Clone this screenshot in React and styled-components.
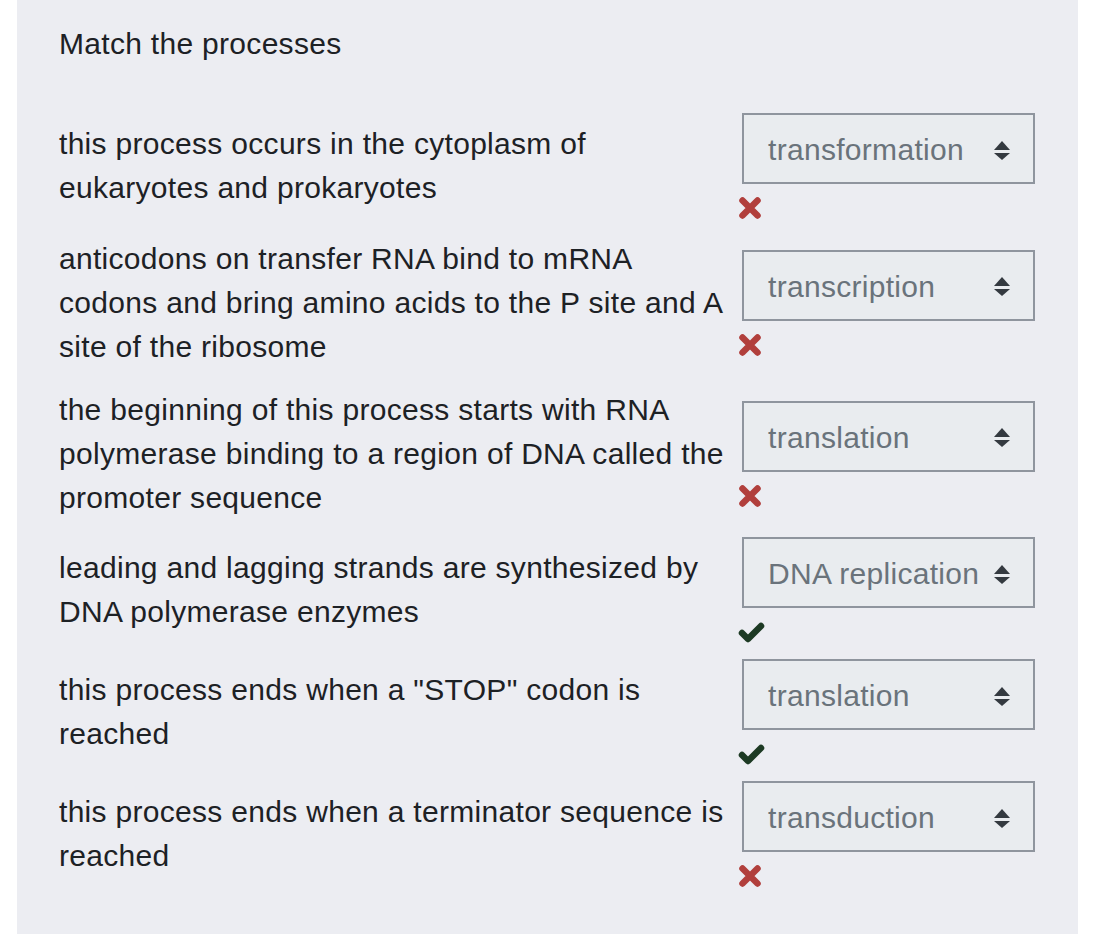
import React from "react";
import styled, { createGlobalStyle } from "styled-components";

const GlobalStyle = createGlobalStyle`
  html, body { margin: 0; padding: 0; background: #ffffff; }
  body { font-family: "Liberation Sans", Arial, sans-serif; color: #1d2125; }
`;

const Panel = styled.div`
  margin-left: 17px;
  width: 1061px;
  box-sizing: border-box;
  background: #ecedf2;
  padding: 22px 0 39px 42px;
`;

const Title = styled.div`
  font-size: 30px;
  letter-spacing: 0.3px;
  line-height: 44px;
  color: #1d2125;
  margin-bottom: 39px;
`;

const Table = styled.div`
  display: grid;
  grid-template-columns: 683px 293px;
  align-items: center;
`;

const Prompt = styled.div`
  font-size: 30px;
  letter-spacing: 0.3px;
  line-height: 44px;
  padding: 9.5px 0;
  color: #1d2125;
  white-space: nowrap;
`;

const Control = styled.div`
  display: flex;
  flex-direction: column;
  padding: 8px 0;
`;

const SelectBox = styled.div`
  box-sizing: border-box;
  width: 293px;
  height: 71px;
  border: 2px solid #8f959e;
  background: #e9ecef;
  display: flex;
  align-items: center;
  justify-content: space-between;
  padding: 3px 23px 0 24px;
  font-size: 30px;
  letter-spacing: 0.3px;
  color: #6a737b;
`;

const Feedback = styled.div`
  height: 22px;
  margin-top: 13px;
  margin-left: -5px;
  display: flex;
  align-items: center;
`;

const Arrows = () => (
  <svg width="16" height="19" viewBox="0 0 16 19" aria-hidden="true">
    <path d="M0 9 L8 0 L16 9 Z" fill="#343a40" />
    <path d="M0 12 L16 12 L8 19 Z" fill="#343a40" />
  </svg>
);

const CrossIcon = () => (
  <svg width="26" height="24" viewBox="0 0 26 24" aria-label="Incorrect">
    <path
      d="M5.5 4.5 L20.5 19.5 M20.5 4.5 L5.5 19.5"
      stroke="#b13f3c"
      strokeWidth="6.5"
      strokeLinecap="round"
      fill="none"
    />
  </svg>
);

const CheckIcon = () => (
  <svg width="28" height="24" viewBox="0 0 28 24" aria-label="Correct">
    <path
      d="M5 13 L11 19 L24 6"
      stroke="#1d3a24"
      strokeWidth="6.5"
      strokeLinecap="round"
      strokeLinejoin="round"
      fill="none"
    />
  </svg>
);

const rows = [
  {
    lines: ["this process occurs in the cytoplasm of", "eukaryotes and prokaryotes"],
    value: "transformation",
    correct: false,
  },
  {
    lines: [
      "anticodons on transfer RNA bind to mRNA",
      "codons and bring amino acids to the P site and A",
      "site of the ribosome",
    ],
    value: "transcription",
    correct: false,
  },
  {
    lines: [
      "the beginning of this process starts with RNA",
      "polymerase binding to a region of DNA called the",
      "promoter sequence",
    ],
    value: "translation",
    correct: false,
  },
  {
    lines: ["leading and lagging strands are synthesized by", "DNA polymerase enzymes"],
    value: "DNA replication",
    correct: true,
  },
  {
    lines: ['this process ends when a "STOP" codon is', "reached"],
    value: "translation",
    correct: true,
  },
  {
    lines: ["this process ends when a terminator sequence is", "reached"],
    value: "transduction",
    correct: false,
  },
];

export default function App() {
  return (
    <>
      <GlobalStyle />
      <Panel>
        <Title>Match the processes</Title>
        <Table>
          {rows.map((r, i) => (
            <React.Fragment key={i}>
              <Prompt>
                {r.lines.map((l, j) => (
                  <React.Fragment key={j}>
                    {l}
                    {j < r.lines.length - 1 && <br />}
                  </React.Fragment>
                ))}
              </Prompt>
              <Control>
                <SelectBox>
                  <span>{r.value}</span>
                  <Arrows />
                </SelectBox>
                <Feedback>{r.correct ? <CheckIcon /> : <CrossIcon />}</Feedback>
              </Control>
            </React.Fragment>
          ))}
        </Table>
      </Panel>
    </>
  );
}
